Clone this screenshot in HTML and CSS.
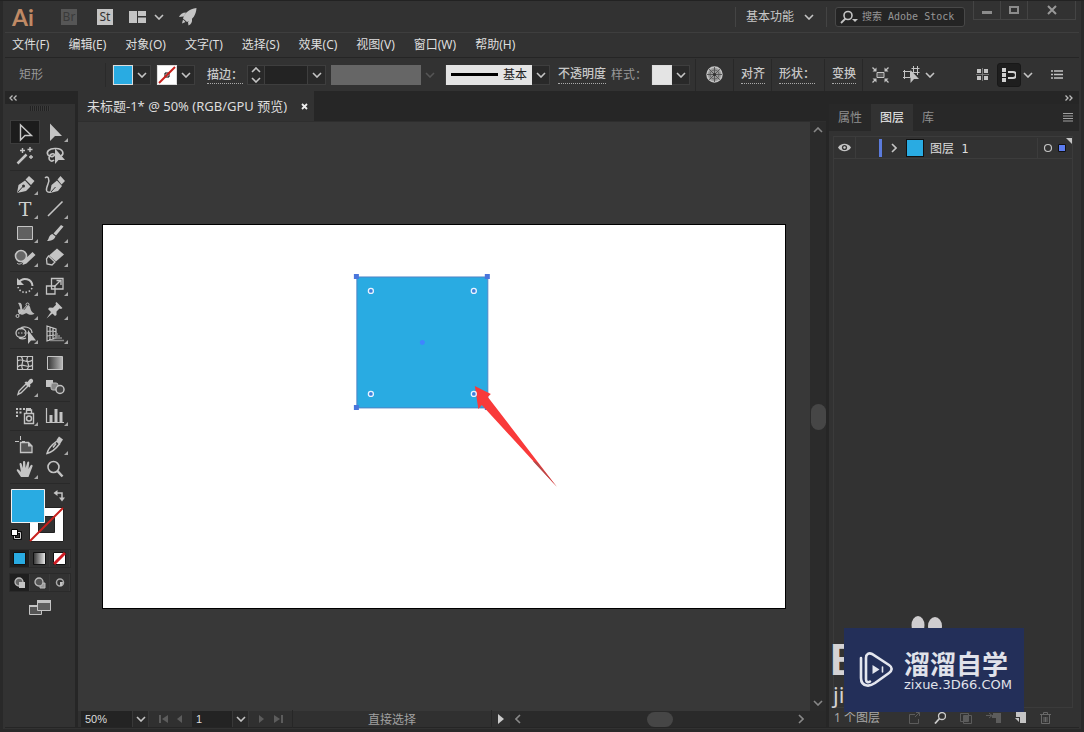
FILE: index.html
```html
<!DOCTYPE html>
<html lang="zh-CN">
<head>
<meta charset="utf-8">
<title>未标题-1* @ 50%</title>
<link rel="stylesheet" href="styles.css">
</head>
<body>
<svg class="defs" aria-hidden="true">
  <symbol id="chev" viewBox="0 0 10 6"><path d="M1 1l4 4 4-4" fill="none" stroke="currentColor" stroke-width="1.6"/></symbol>
  <symbol id="tri" viewBox="0 0 30 24"><path d="M28 18v4h-4z" fill="currentColor"/></symbol>
</svg>

<header class="titlebar">
  <span class="logo">Ai</span>
  <button class="app-badge dim">Br</button>
  <button class="app-badge">St</button>
  <button class="arrange" aria-label="排列文档">
    <svg width="17" height="12"><path d="M0 0h8v12H0zM9 0h8v5H9zM9 6.500h8V12H9z" fill="#c4c4c4"/></svg>
    <svg class="chev"><use href="#chev"/></svg>
  </button>
  <button class="rocket" aria-label="GPU 性能"><svg width="18" height="18"><path d="M17.500 0C10 1 6 4.500 4 10.500l4 3.500C14 11.500 17 7 17.500 0zM7 4.500C3.500 4.500 1 6.500 0 9l4.500-.5zM13 10.500L9 14l.5 3.500C12 16.500 13.500 14 13 10.500zM4 11.500l2.500 2.500L3 15.500z" fill="#c4c4c4"/></svg></button>
  <span class="spacer"></span>
  <div class="workspace">
    <select aria-label="工作区"><option>基本功能</option></select>
    <svg class="chev"><use href="#chev"/></svg>
  </div>
  <label class="search">
    <svg width="18" height="14"><circle cx="8" cy="5.500" r="4" fill="none" stroke="#c4c4c4" stroke-width="1.600"/><path d="M5.500 8.500L1 13" stroke="#c4c4c4" stroke-width="1.800"/><path d="M12 9h6l-3 3z" fill="#c4c4c4"/></svg>
    <input type="text" aria-label="搜索" placeholder="搜索 Adobe Stock">
  </label>
  <div class="winbtns">
    <button aria-label="最小化"><svg width="10" height="10"><path d="M0 6h10v3H0z" fill="#8c8c8c"/></svg></button>
    <button aria-label="最大化"><svg width="10" height="10"><path d="M1 2h8v6H1z" fill="none" stroke="#8c8c8c" stroke-width="2"/></svg></button>
    <button class="close" aria-label="关闭"><svg width="10" height="10"><path d="M1 1l8 8M9 1L1 9" stroke="#999" stroke-width="2"/></svg></button>
  </div>
</header>

<nav class="menubar">
  <button>文件(F)</button><button>编辑(E)</button><button>对象(O)</button><button>文字(T)</button><button>选择(S)</button><button>效果(C)</button><button>视图(V)</button><button>窗口(W)</button><button>帮助(H)</button>
</nav>

<section class="control">
  <span class="kind">矩形</span>
  <div class="combo"><button class="swatch blue" aria-label="填色"></button><button class="drop" aria-label="填色选项"><svg class="chev"><use href="#chev"/></svg></button></div>
  <div class="combo"><button class="swatch none" aria-label="描边颜色"><svg width="18" height="18"><path d="M7 7h4v4H7z" fill="none" stroke="#000"/><path d="M1 17L17 1" stroke="#c8201c" stroke-width="2"/></svg></button><button class="drop" aria-label="描边颜色选项"><svg class="chev"><use href="#chev"/></svg></button></div>
  <label class="link weight-label" for="weight">描边：</label>
  <div class="combo weight">
    <button class="spin" aria-label="增减"><svg width="10" height="16"><path d="M1 5l4-4 4 4M1 11l4 4 4-4" fill="none" stroke="#c4c4c4" stroke-width="1.600"/></svg></button>
    <input id="weight" type="text">
    <button class="drop" aria-label="描边粗细"><svg class="chev"><use href="#chev"/></svg></button>
  </div>
  <div class="profile"><span></span><svg class="chev faint"><use href="#chev"/></svg></div>
  <div class="combo"><button class="brushdef"><i></i>基本</button><button class="drop" aria-label="画笔定义"><svg class="chev"><use href="#chev"/></svg></button></div>
  <button class="link opacity">不透明度</button>
  <span class="style-label">样式：</span>
  <div class="combo"><button class="swatch pale" aria-label="样式"></button><button class="drop" aria-label="图形样式"><svg class="chev"><use href="#chev"/></svg></button></div>
  <button class="cell wheel" aria-label="重新着色图稿"><svg width="17" height="17" viewBox="0 0 17 17"><circle cx="8.500" cy="8.500" r="7.500" fill="#999" stroke="#c4c4c4" stroke-width="1.500"/><path d="M8.500 1v15M1 8.500h15M3.200 3.200l10.600 10.600M13.800 3.200L3.200 13.800" stroke="#444" stroke-width=".8"/><circle cx="8.500" cy="8.500" r="4.500" fill="none" stroke="#555" stroke-width=".8"/><circle cx="8.500" cy="8.500" r="1.600" fill="#333"/></svg></button>
  <div class="cell"><button class="link">对齐</button></div>
  <div class="cell shape"><button class="link">形状：</button></div>
  <div class="cell"><button class="link">变换</button></div>
  <div class="cell actions">
    <button aria-label="隔离选中的对象"><svg width="17" height="16"><path d="M5 5.500h7v5H5z" fill="#555" stroke="#c4c4c4"/><path d="M4.500 .5v4h-4zM12.500 .5v4h4zM4.500 15.500v-4h-4zM12.500 15.500v-4h4z" fill="#c4c4c4"/><path d="M.5 .5l3 3M16.500 .5l-3 3M.5 15.500l3-3M16.500 15.500l-3-3" stroke="#c4c4c4" stroke-width="1.300"/></svg></button>
    <button class="similar" aria-label="选择类似的对象"><svg width="17" height="17"><path d="M1.500 5.500h6v6h-6zM10.500 2.500h4v4h-4zM0 5.500h1M0 11.500h3M1.500 4v9M8.500 2.500h8M8.500 6.500h8M10.500 0v3M14.500 0v9" fill="none" stroke="#c4c4c4"/><path d="M7.500 4V17l3.500-4H16z" fill="#c4c4c4"/></svg><svg class="chev"><use href="#chev"/></svg></button>
  </div>
  <span class="spacer"></span>
  <button aria-label="网格"><svg width="13" height="13"><path d="M1 1h4v4H1zM8 1h4v4H8zM1 8h4v4H1zM8 8h4v4H8z" fill="#c4c4c4"/><path d="M0 6.500h13M6.500 0v13" stroke="#777"/></svg></button>
  <button class="snap" aria-label="对齐像素"><svg width="14" height="14"><path d="M0 0h4v4H0zM0 5h4v4H0zM0 10h4v4H0z" fill="#d0d0d0"/><path d="M6 4h5a2.500 2.500 0 010 6H6" fill="none" stroke="#d0d0d0" stroke-width="2"/></svg></button>
  <svg class="chev"><use href="#chev"/></svg>
  <button class="list-icon" aria-label="选项"><svg width="12" height="9"><path d="M3 1h9M3 4.500h9M3 8h9M0 1h2M0 4.500h2M0 8h2" stroke="#c4c4c4" stroke-width="1.300"/></svg></button>
</section>

<main class="work">
  <aside class="tools">
    <button class="collapse" aria-label="折叠"><svg width="8" height="6"><path d="M3.500 .5L1 3l2.500 2.500M7.500 .5L5 3l2.500 2.500" fill="none" stroke="#bbb" stroke-width="1.300"/></svg></button>
    <div class="grip"></div>
    <div class="toolset">
      <button class="on" aria-label="选择工具"><svg><path d="M10.500 5v15l4.500-4.500h6.500z" fill="none" stroke="#c8c8c8" stroke-width="1.400"/></svg></button>
      <button aria-label="直接选择工具"><svg><path d="M10 3.500V21l5-5h7z" fill="#c4c4c4"/><use href="#tri"/></svg></button>
      <button aria-label="魔棒工具"><svg><path d="M7.500 19.500l9-9" stroke="#c4c4c4" stroke-width="2.500"/><path d="M12.500 4v5M10 6.500h5M20 3v5M17.500 5.500h5M21 11v4M19 13h4" stroke="#c4c4c4" stroke-width="1.400"/></svg></button>
      <button aria-label="套索工具"><svg><path d="M21 12c3-2 3-7-5-7.500C9 4 6 8 8 11c3 3 8 1 6-1-2-1-5 1-5 4s3 4 5 2" fill="none" stroke="#c4c4c4" stroke-width="1.600"/><path d="M15 4.500V20l3.500-4H25z" fill="#c4c4c4"/></svg></button>
    </div>
    <div class="toolset">
      <button aria-label="钢笔工具"><svg><path d="M7 20l1.500-8 6.500-4.500 5.500 6L16 18zM15.500 6.500l3.500-3.500 5.500 5-3.500 4z" fill="#c4c4c4"/><path d="M7.500 19.500l5-5.500" stroke="#333"/><circle cx="13.500" cy="13" r="1.500" fill="#333"/><use href="#tri"/></svg></button>
      <button aria-label="曲率工具"><svg><path d="M10 20l1.500-8L17 7.500l5 5.500-4 5zM17.500 6.500L20.500 3l4.500 5-3.500 3.500z" fill="#c4c4c4"/><path d="M10.500 19.500l5-5.500" stroke="#333"/><path d="M5 5c3-3 5 1 3 6s-3 9 3 8" fill="none" stroke="#c4c4c4" stroke-width="1.500"/></svg></button>
      <button aria-label="文字工具"><svg><text x="15" y="19" text-anchor="middle" class="glyph">T</text><use href="#tri"/></svg></button>
      <button aria-label="直线段工具"><svg><path d="M8 19L22.500 4.500" stroke="#c4c4c4" stroke-width="1.600"/><use href="#tri"/></svg></button>
      <button aria-label="矩形工具"><svg><path d="M7.500 5.500h15v13h-15z" fill="#606060" stroke="#c4c4c4"/><use href="#tri"/></svg></button>
      <button aria-label="画笔工具"><svg><path d="M21 4l2.500 1.500-7.500 9-2.500-2zM12.500 13l3 2.500C14 19 11 20 7 20c2-1.500 1.500-6 5.500-7z" fill="#c4c4c4"/><use href="#tri"/></svg></button>
      <button aria-label="Shaper 工具"><svg><circle cx="11" cy="11" r="5.500" fill="#666" stroke="#c4c4c4" stroke-width="1.600"/><path d="M12.500 20l1-4.500L22.500 7l3 3-9 8.500z" fill="#c4c4c4"/><path d="M7 18c2 2 4 1 6-1" stroke="#c4c4c4" fill="none"/><use href="#tri"/></svg></button>
      <button aria-label="橡皮擦工具"><svg><path d="M17 3.500l7 6-8 7-7-6z" fill="#c4c4c4"/><path d="M8.500 11l6.500 6-3 3-5-1-.5-5z" fill="none" stroke="#c4c4c4" stroke-width="1.300"/><use href="#tri"/></svg></button>
    </div>
    <div class="toolset">
      <button aria-label="旋转工具"><svg><path d="M9 8a7.500 7.500 0 0113.500 4" fill="none" stroke="#c4c4c4" stroke-width="2"/><path d="M22 14a7.500 7.500 0 01-14-1" fill="none" stroke="#c4c4c4" stroke-width="1.600" stroke-dasharray="1.500 1.800"/><path d="M7 4v7h7z" fill="#c4c4c4"/><use href="#tri"/></svg></button>
      <button aria-label="比例缩放工具"><svg><path d="M11.500 4.500H23V15H11.500zM6.500 12H15v8H6.500z" fill="none" stroke="#c4c4c4" stroke-width="1.300"/><path d="M14 13l6-6M16.500 6.500H21V11" fill="none" stroke="#c4c4c4" stroke-width="1.300"/><use href="#tri"/></svg></button>
      <button aria-label="宽度工具"><svg><path d="M8 5c3-1 4 1 4 4s2 4 3.500 1.500S19 6 20 9s1 5 4.500 6.500c-3 2.500-5.500 1-7.500 0s-3 2-6 1-3-2.500-3-4 1-1.500 2-1S9.500 7 8 5z" fill="#bbb"/><path d="M7.500 18L18 6" stroke="#c4c4c4"/><circle cx="7.500" cy="18" r="1.500" fill="#333" stroke="#c4c4c4"/><circle cx="17.500" cy="6.500" r="1.500" fill="#333" stroke="#c4c4c4"/><use href="#tri"/></svg></button>
      <button aria-label="操控变形工具"><svg><path d="M16.500 4l6 6-1.500 1-1.500-.5-3 3 0 3.500L15 18l-7-7 1.500-1.500 3.500.2 3-3L15.500 5zM11 14l1.500 1.500L6.500 20.500z" fill="#c4c4c4"/><use href="#tri"/></svg></button>
      <button aria-label="形状生成器工具"><svg><ellipse cx="11" cy="11" rx="5" ry="4.500" fill="none" stroke="#c4c4c4" stroke-width="1.300"/><path d="M10 7c3-4 12-2 12 4M9 16c2 1 5 1 7 0" fill="none" stroke="#c4c4c4" stroke-width="1.300"/><path d="M8 11h10" stroke="#c4c4c4" stroke-dasharray="1.500 1.500"/><path d="M18 8v14l3-3.500h5z" fill="#c4c4c4"/><use href="#tri"/></svg></button>
      <button aria-label="透视网格工具"><svg><path d="M7 4v15l9-3V7zM10 5v13M13 6v11M7 9l9 .5M7 14l9-1" fill="none" stroke="#c4c4c4" stroke-width="1.200"/><path d="M16 12h2M15 14h5M14 16h8M10 18.500h14" stroke="#888" stroke-width="1.400"/><use href="#tri"/></svg></button>
    </div>
    <div class="toolset">
      <button aria-label="网格工具"><svg><path d="M7.500 5.500h15v13h-15zM7.500 10c5-4 9 4 15-1M7.500 16c5-6 10 3 15-2M11 5.500c5 5-2 8 2 13M18 5.500c-4 5 4 8-1 13" fill="none" stroke="#c4c4c4" stroke-width="1.200"/></svg></button>
      <button aria-label="渐变工具"><svg><defs><linearGradient id="g1"><stop stop-color="#333"/><stop offset="1" stop-color="#bbb"/></linearGradient></defs><path d="M7.500 5.500h15v13h-15z" fill="url(#g1)" stroke="#c4c4c4"/></svg></button>
      <button aria-label="吸管工具"><svg><path d="M8 19.500l1-3.500 7-7 2 2-7 7z" fill="none" stroke="#c4c4c4" stroke-width="1.400"/><path d="M14.500 7.500l1.500-1 1.500.5 2-2.500c2-2 5 1 3 3l-2.500 2 .5 1.500-1 1.500z" fill="#c4c4c4"/><use href="#tri"/></svg></button>
      <button aria-label="混合工具"><svg><path d="M6 5h7v7H6z" fill="#c4c4c4"/><rect x="11" y="8" width="7" height="7" rx="2" fill="#888" stroke="#bbb"/><circle cx="20" cy="14.500" r="4" fill="#444" stroke="#c4c4c4" stroke-width="1.500"/></svg></button>
    </div>
    <div class="toolset">
      <button aria-label="符号喷枪工具"><svg><path d="M6 5h2M9.500 5h2M13 5h2M6 8.500h2M9.500 8.500h2M6 12h2" stroke="#c4c4c4" stroke-width="2"/><path d="M14.500 9.500h9v10h-9zM16.500 9V6h5v3" fill="none" stroke="#c4c4c4" stroke-width="1.400"/><path d="M16 4h5v3h-5z" fill="#c4c4c4"/><circle cx="19" cy="14.500" r="2.500" fill="none" stroke="#c4c4c4" stroke-width="1.500"/><use href="#tri"/></svg></button>
      <button aria-label="柱形图工具"><svg><path d="M6.500 4v14.500H24" fill="none" stroke="#c4c4c4" stroke-width="1.200"/><path d="M9.500 11h3v7h-3zM14.500 5h3v13h-3zM19.500 8h3v10h-3z" fill="#c4c4c4"/><use href="#tri"/></svg></button>
    </div>
    <div class="toolset">
      <button aria-label="画板工具"><svg><path d="M5 8.500h4M12 8.500h3M10.500 3v4M10.500 10v2" stroke="#c4c4c4"/><path d="M10.500 9.500h8l3.500 3.500v6.500H10.500z" fill="#555" stroke="#c4c4c4" stroke-width="1.300"/><path d="M18 9v4.500h4.500z" fill="#c4c4c4"/></svg></button>
      <button aria-label="切片工具"><svg><path d="M7 20.500c1-5 5-9 10-12.500l2.500 3c-3 4-7 8-12.500 9.500zM16 10.500l-3 4" fill="none" stroke="#c4c4c4" stroke-width="1.500"/><path d="M16.500 7L19 3.500l4 3-3 4.500z" fill="#c4c4c4"/><use href="#tri"/></svg></button>
      <button aria-label="抓手工具"><svg><path d="M11 20L7 14c-1-2 1-2.500 2-1l2 2L9.500 7c0-1.500 2-1.500 2.200 0L13 11V5c0-1.500 2.200-1.500 2.200 0l.4 6 1.600-5.500c.5-1.500 2.300-1 2 .5L18.500 12l2-3.500c1-1.500 2.500-.5 2 1L20 16l-1.500 4z" fill="#c4c4c4"/><use href="#tri"/></svg></button>
      <button aria-label="缩放工具"><svg><circle cx="13.500" cy="10" r="5.500" fill="none" stroke="#c4c4c4" stroke-width="1.600"/><path d="M17.500 14l5 5.500" stroke="#c4c4c4" stroke-width="2.500"/></svg></button>
    </div>
    <svg class="colors" width="60" height="54" viewBox="0 0 60 54" role="img" aria-label="填色和描边">
      <path d="M19.500 18.500h34v34h-34z" fill="#fff" stroke="#222"/><path d="M28.500 27.500h16v16h-16z" fill="#323232" stroke="#222"/><path d="M20 52l33-33" stroke="#c8201c" stroke-width="2"/>
      <path d="M1.500 .5h33v33h-33z" fill="#29abe2" stroke="#f2f2f2"/>
      <path d="M46 4h6v6" fill="none" stroke="#c4c4c4" stroke-width="1.500"/><path d="M43.500 4l4-3v6zM49 8.500h6L52 12.500z" fill="#c4c4c4"/>
      <path d="M4.500 43.500h6v6h-6z" fill="none" stroke="#000" stroke-width="2.500"/><path d="M4.500 43.500h6v6h-6z" fill="none" stroke="#ccc"/><path d="M1.500 40.500h6v6h-6z" fill="#fff" stroke="#000"/>
    </svg>
    <div class="modes">
      <button class="on" aria-label="颜色"><svg width="13" height="13"><path d="M.5 .5h12v12H.5z" fill="#29abe2" stroke="#111"/></svg></button>
      <button aria-label="渐变"><svg width="13" height="13"><defs><linearGradient id="g2"><stop stop-color="#333"/><stop offset="1" stop-color="#eee"/></linearGradient></defs><path d="M.5 .5h12v12H.5z" fill="url(#g2)" stroke="#111"/></svg></button>
      <button aria-label="无"><svg width="13" height="13"><path d="M.5 .5h12v12H.5z" fill="#fff" stroke="#111"/><path d="M1 12L12 1" stroke="#d01c24" stroke-width="3"/></svg></button>
    </div>
    <div class="modes">
      <button class="on" aria-label="正常绘图"><svg width="12" height="12"><circle cx="5" cy="5" r="4" fill="#666" stroke="#bbb" stroke-width="1.300"/><path d="M5 5h6v6H5z" fill="#c4c4c4"/></svg></button>
      <button aria-label="背面绘图"><svg width="12" height="12"><path d="M6 6h5v5H6z" fill="#999" stroke="#bbb"/><circle cx="5" cy="5" r="4" fill="#555" stroke="#bbb" stroke-width="1.300"/></svg></button>
      <button aria-label="内部绘图"><svg width="12" height="12"><circle cx="6" cy="5.500" r="3.500" fill="#333" stroke="#aaa" stroke-width="1.500"/><path d="M6 5h3l-1 4H6z" fill="#c4c4c4"/></svg></button>
    </div>
    <button class="screen" aria-label="更改屏幕模式"><svg width="22" height="16"><path d="M.5 5.500h12v9H.5z" fill="#555" stroke="#c4c4c4"/><path d="M8.500 1.500h13v9h-13z" fill="#606060" stroke="#c4c4c4"/><path d="M8 0h14v3H8zM0 5h8v2H0z" fill="#c4c4c4"/></svg></button>
  </aside>

  <section class="doc">
    <div class="tabs"><div class="tab"><span>未标题-1* @ 50% (RGB/GPU 预览)</span><button aria-label="关闭文档"><svg width="7" height="7"><path d="M1 1l5 5M6 1L1 6" stroke="#eee" stroke-width="1.800"/></svg></button></div></div>
    <div class="view">
      <div class="canvas">
        <div class="artboard">
          <svg viewBox="0 0 682 383">
            <path d="M254 52h131v131H254z" fill="#29abe2" stroke="#4f86c6"/>
            <path d="M251 49h5v5h-5zM382 49h5v5h-5zM251 180h5v5h-5zM382 180h5v5h-5z" fill="#4a76dc"/>
            <circle cx="319.500" cy="117.500" r="2.500" fill="#3f85ff"/>
            <g fill="#3f80dc" stroke="#e8f4ff" stroke-width="1.300"><circle cx="268" cy="66" r="2.500"/><circle cx="371" cy="66" r="2.500"/><circle cx="268" cy="169" r="2.500"/></g>
            <path d="M372 161l16 8-3 3 69 90-75-82-3.500 4z" fill="#f93a3a"/>
            <path d="M434 237l20 25-24-26z" fill="#b24b4b"/>
            <circle cx="371" cy="169" r="2.500" fill="#3f80dc" stroke="#e8f4ff" stroke-width="1.300"/>
          </svg>
        </div>
      </div>
      <div class="vscroll"><svg class="chev up"><use href="#chev"/></svg><i></i><svg class="chev"><use href="#chev"/></svg></div>
    </div>
    <footer class="status">
      <input class="zoom" type="text" value="50%" aria-label="缩放"><button class="drop" aria-label="缩放级别"><svg class="chev"><use href="#chev"/></svg></button>
      <span class="nav"><button aria-label="首项"><svg width="9" height="8"><path d="M0 0h2v8H0zM9 0v8L3 4z" fill="#5c5c5c"/></svg></button><button aria-label="上一项"><svg width="6" height="8"><path d="M5 0v8L0 4z" fill="#5c5c5c"/></svg></button></span>
      <input class="page" type="text" value="1" aria-label="画板"><button class="drop" aria-label="画板列表"><svg class="chev"><use href="#chev"/></svg></button>
      <span class="nav"><button aria-label="下一项"><svg width="6" height="8"><path d="M0 0v8l5-4z" fill="#5c5c5c"/></svg></button><button aria-label="末项"><svg width="9" height="8"><path d="M7 0h2v8H7zM0 0v8l6-4z" fill="#5c5c5c"/></svg></button></span>
      <span class="toolname">直接选择</span>
      <button class="play" aria-label="状态选项"><svg width="6" height="10"><path d="M0 0v10l6-5z" fill="#ccc"/></svg></button>
      <div class="hscroll"><svg class="chev left"><use href="#chev"/></svg><i></i><svg class="chev right"><use href="#chev"/></svg></div>
    </footer>
  </section>

  <aside class="panel">
    <div class="expand"><svg width="8" height="6"><path d="M.5 .5L3 3 .5 5.500M4.500 .5L7 3 4.500 5.500" fill="none" stroke="#bbb" stroke-width="1.300"/></svg></div>
    <div class="ptabs" role="tablist"><button role="tab">属性</button><button role="tab" class="on">图层</button><button role="tab">库</button><span class="spacer"></span><svg width="10" height="9"><path d="M0 .5h10M0 3h10M0 5.500h10M0 8h10" stroke="#a0a0a0"/></svg></div>
    <div class="layers">
      <div class="layer">
        <button class="eye" aria-label="可见"><svg width="13" height="9" viewBox="0 0 13 9"><path d="M0 4.500C3-.5 10-.5 13 4.500 10 9.500 3 9.500 0 4.500z" fill="#c4c4c4"/><circle cx="6.500" cy="4.500" r="2.600" fill="#333"/><circle cx="6.500" cy="4.500" r="1.200" fill="#ccc"/></svg></button>
        <span class="lock"></span><span class="mark"></span>
        <button class="open" aria-label="展开"><svg class="chev right"><use href="#chev"/></svg></button>
        <span class="thumb"></span><span class="lname">图层 1</span>
        <span class="target"><svg width="26" height="20"><circle cx="7" cy="10" r="3.500" fill="none" stroke="#c4c4c4" stroke-width="1.200"/><path d="M17.500 6.500h7v7h-7z" fill="#5c7cf0" stroke="#111"/></svg></span>
        <svg class="fold" width="6" height="6"><path d="M0 0h6v6z" fill="#c4c4c4"/></svg>
      </div>
    </div>
    <footer class="pfoot"><span>1 个图层</span>
      <svg width="11" height="12"><path d="M6 2.500H.5v9h9V7M6 5l4-4M7 .5h3.500V4" fill="none" stroke="#5c5c5c"/></svg>
      <svg width="12" height="12"><circle cx="8" cy="4" r="3.500" fill="none" stroke="#ccc" stroke-width="1.300"/><path d="M5.500 6.500L1 11.500" stroke="#ccc" stroke-width="1.800"/></svg>
      <svg width="12" height="12"><path d="M.5 1.500h8v8h-8zM3.500 3.500h8v8h-8z" fill="none" stroke="#5c5c5c"/><path d="M4 4h4v5H4z" fill="#5c5c5c"/></svg>
      <svg width="15" height="12"><path d="M0 3.500h5M3 1l3 2.500L3 6M6.500 3v3" fill="none" stroke="#5c5c5c"/><path d="M7 1h8v10h-5V6H7z" fill="#5c5c5c"/></svg>
      <svg width="11" height="12"><path d="M1 0h10v11H5V5H1z" fill="#c4c4c4"/><path d="M0 6h4v4z" fill="#c4c4c4"/></svg>
      <svg width="11" height="12"><path d="M0 2.500h11M3.500 2V.5h4V2M1.500 3v8.500h8V3M4 5v5M5.500 5v5M7 5v5" fill="none" stroke="#686868"/></svg>
    </footer>
    <div class="wm">
      <svg class="ears" width="32" height="14"><ellipse cx="7" cy="9" rx="6.500" ry="9" fill="#cfcdcf"/><ellipse cx="24" cy="10" rx="7" ry="9" fill="#cfcdcf"/></svg>
      <div class="under"><b>B</b><span>ji</span></div>
      <div class="card">
        <svg width="34" height="36" viewBox="0 0 34 36" fill="none" stroke="#e4e6ee" stroke-width="2.600" stroke-linecap="round"><path d="M11 29.500c-2 1.500-4 .5-4-2V6c0-4 3-5.500 6-4l17 11c4 2.500 3 6 0 8L16 31c-3 2-5 3-8 2.500-4-.5-6-3.500-6-7.500V6"/><path d="M13.500 13v9l7-4.500z" fill="#e4e6ee" stroke="none"/><path d="M23.500 15v5" stroke-width="1.600"/></svg>
        <div class="brand"><strong>溜溜自学</strong><span>zixue.3D66.COM</span></div>
      </div>
    </div>
  </aside>
</main>
</body>
</html>
```
FILE: styles.css
```css
* { box-sizing: border-box; }

body {
  margin: 0;
  height: 100vh;
  display: flex;
  flex-direction: column;
  overflow: hidden;
  padding: 0 5px 4px;
  background: #323232;
  border-top: 1px solid #222;
  color: #c8c8c8;
  font: 12px/16px "Noto Sans", "Noto Sans CJK SC", sans-serif;
  box-shadow: inset 3px 0 #292929, inset -3px 0 #292929, inset 0 -3px #292929;
}

button, input, select {
  margin: 0;
  padding: 0;
  border: 0;
  background: none;
  color: inherit;
  font: inherit;
  min-width: 0;
}

button { display: flex; align-items: center; justify-content: center; flex: none; }
svg { display: block; flex: none; }
.defs { position: absolute; width: 0; height: 0; }
.spacer { flex: 1; }
.chev { width: 10px; height: 6px; color: #c4c4c4; }
.chev.up { transform: rotate(180deg); }
.chev.left { transform: rotate(90deg); }
.chev.right { transform: rotate(-90deg); }
.chev.faint { color: #555; }

/* title bar */
.titlebar { display: flex; align-items: center; height: 32px; flex: none; padding: 0 3px 0 7px; border-bottom: 1px solid #3e3e3e; }
.logo { width: 49px; color: #c08a65; font: bold 23px/28px Lato, sans-serif; }
.app-badge { width: 16px; height: 16px; margin-right: 20px; background: #c4c4c4; color: #333; font: 12px/16px "Noto Sans", sans-serif; }
.app-badge.dim { background: #565656; color: #3a3a3a; }
.arrange { gap: 8px; margin: 0 15px 0 -4px; }
.workspace { display: flex; align-items: center; height: 20px; padding: 0 12px 0 10px; border-left: 1px solid #444; border-right: 1px solid #444; gap: 8px; }
.workspace select { appearance: none; width: 50px; }
.search { display: flex; align-items: center; gap: 4px; width: 130px; height: 20px; margin: 0 8px; padding: 0 4px; background: #242424; border: 1px solid #484848; border-radius: 3px; }
.search input { flex: 1; font: 10px/16px "DejaVu Sans Mono", "Noto Sans CJK SC", monospace; outline: 0; }
.search input::placeholder { color: #969696; opacity: 1; }
.winbtns { display: flex; align-self: flex-start; height: 19px; border: 1px solid #444; border-top: 0; }
.winbtns button { width: 27px; border-right: 1px solid #444; }
.winbtns .close { width: 47px; border: 0; }

/* menu */
.menubar { display: flex; gap: 19px; flex: none; height: 25px; padding-left: 7px; color: #dedede; border-bottom: 1px solid #252525; }
.menubar button { height: 24px; }

/* control bar */
.control { display: flex; align-items: center; flex: none; height: 33px; font-family: "Liberation Sans", "Noto Sans CJK SC", sans-serif; }
.kind { width: 101px; margin-right: 6px; padding-left: 14px; color: #999; border-right: 1px solid #2a2a2a; line-height: 24px; }
.combo { display: flex; align-items: center; height: 20px; margin-right: 5px; border: 1px solid #3e3e3e; }
.swatch { width: 20px; height: 20px; border: 1px solid #ddd; }
.blue { background: #29abe2; }
.none { background: #fff; }
.pale { background: #e4e4e4; }
.drop { width: 17px; height: 18px; background: #292929; }
.link { height: 18px; border-bottom: 1px dotted #aaa; color: #c8c8c8; font-weight: 500; line-height: 18px; white-space: nowrap; }
.weight-label { margin: 0 4px 0 7px; }
.spin { width: 16px; height: 18px; background: #292929; }
.weight input { width: 44px; height: 18px; background: #232323; border: solid #3e3e3e; border-width: 0 1px; }
.profile { display: flex; align-items: center; gap: 4px; margin-right: 10px; }
.profile span { width: 90px; height: 20px; background: #666; }
.brushdef { width: 86px; height: 20px; gap: 5px; background: #e4e4e4; color: #222; }
.brushdef i { width: 47px; height: 3px; background: #000; }
.opacity { margin-left: 3px; }
.style-label { margin: 0 4px 0 5px; color: #999; white-space: nowrap; }
.cell { display: flex; align-items: center; height: 32px; padding: 0 6px 0 7px; border-left: 1px solid #282828; }
.wheel { padding: 0 10px; }
.shape { padding-right: 9px; }
.actions { gap: 14px; padding-left: 9px; }
.similar { gap: 5px; }
.snap { width: 24px; height: 24px; margin: 0 2px 0 8px; background: #1e1e1e; border: 1px solid #181818; border-radius: 3px; }
.list-icon { margin: 0 16px 0 18px; }

/* work area */
.work { display: flex; flex: 1; min-height: 0; gap: 3px; background: #262626; border-bottom: 1px solid #252525; }
.tools { width: 70px; flex: none; background: #323232; display: flex; flex-direction: column; align-items: center; }
.collapse { align-self: stretch; height: 13px; padding-left: 4px; justify-content: flex-start; background: #262626; }
.grip { width: 20px; height: 5px; margin: 2px 0 9px; background: repeating-linear-gradient(90deg, #222 0 1px, #3a3a3a 1px 2px); }
.toolset { display: grid; grid-template-columns: 30px 30px; grid-auto-rows: 24px; padding-bottom: 2px; margin-bottom: 2px; border-bottom: 1px solid #292929; }
.toolset svg { width: 30px; height: 24px; color: #a8a8a8; }
.toolset .on { background: #1c1c1c; box-shadow: inset 0 0 0 1px #3c3c3c; }
.glyph { font: 19px "DejaVu Serif", serif; fill: #d0d0d0; }
.colors { margin: 3px 0 6px; }
.modes { display: flex; margin-bottom: 5px; border: 1px solid #2a2a2a; }
.modes button { width: 20px; height: 17px; border-right: 1px solid #3a3a3a; }
.modes .on { background: #1f1f1f; }
.screen { margin-top: 3px; }

.doc { flex: 1; min-width: 0; display: flex; flex-direction: column; }
.tabs { display: flex; height: 30px; flex: none; }
.tab { display: flex; align-items: center; width: 236px; padding: 0 6px 0 9px; justify-content: space-between; background: #323232; color: #dcdcdc; font-size: 13px; white-space: nowrap; }
.view { display: flex; flex: 1; min-height: 0; border-top: 1px solid #2e2e2e; }
.canvas { flex: 1; display: flex; align-items: center; justify-content: center; background: #383838; }
.artboard { width: 93.4%; background: #fff; border: 1px solid #000; }
.artboard svg { width: 100%; height: auto; }
.vscroll { display: flex; flex-direction: column; align-items: center; justify-content: space-between; width: 16px; padding: 5px 0; background: #2b2b2b; }
.vscroll .chev, .hscroll .chev { color: #888; }
.vscroll i { width: 15px; height: 26px; border-radius: 8px; background: #464646; }
.status { display: flex; align-items: center; flex: none; height: 16px; padding-left: 3px; background: #303030; }
.status input { height: 16px; padding: 0 4px; background: #232323; font: 11px/14px "Liberation Sans", sans-serif; color: #ddd; }
.status .drop { height: 16px; border: solid #383838; border-width: 0 1px; }
.zoom { width: 51px; }
.page { width: 40px; }
.nav { display: flex; justify-content: center; align-items: center; gap: 9px; width: 43px; }
.toolname { flex: 1; padding-top: 2px; line-height: 16px; text-align: center; color: #a0a0a0; border: solid #272727; border-width: 0 1px; }
.play { width: 18px; }
.hscroll { display: flex; align-items: center; justify-content: space-between; width: 316px; height: 16px; padding: 0 20px 0 3px; background: #2a2a2a; }
.hscroll i { width: 26px; height: 15px; border-radius: 8px; background: #464646; }

/* layers panel */
.panel { position: relative; width: 250px; flex: none; display: flex; flex-direction: column; background: #323232; }
.expand { display: flex; align-items: center; justify-content: flex-end; height: 13px; padding-right: 6px; background: #262626; }
.ptabs { display: flex; align-items: center; height: 27px; padding-right: 6px; background: #282828; color: #909090; }
.ptabs button { height: 27px; padding: 1px 9px 0; }
.ptabs .on { background: #323232; color: #f0f0f0; }
.layers { flex: 1; margin: 5px 6px 0 4px; border: solid #3b3b3b; border-width: 0 1px 1px; }
.layer { position: relative; display: flex; align-items: center; height: 23px; border: solid #3c3c3c; border-width: 1px 0; }
.eye { width: 22px; height: 21px; border-right: 1px solid #3c3c3c; }
.lock { width: 23px; }
.mark { width: 3px; height: 18px; background: #5b7bdc; }
.open { width: 24px; }
.thumb { width: 18px; height: 18px; margin-right: 6px; background: #29abe2; border: 1px solid #111; }
.lname { flex: 1; padding-top: 2px; color: #ddd; font-family: "DejaVu Sans Mono", "Noto Sans CJK SC", monospace; }
.target { padding-left: 3px; border-left: 1px solid #3c3c3c; margin-right: 5px; }
.fold { position: absolute; top: 1px; right: 0; }
.pfoot { display: flex; align-items: center; gap: 14px; height: 19px; padding-left: 5px; color: #a8a8a8; }
.pfoot span { width: 61px; white-space: nowrap; }

/* watermark over the panel */
.wm { position: absolute; right: 55px; bottom: 15px; width: 180px; height: 84px; }
.ears { position: absolute; left: 67px; top: -12px; }
.under { position: absolute; left: -14px; top: 9px; color: #d4d2d4; font: 22px/22px "Noto Sans", sans-serif; }
.under b { display: block; font: bold 44px/46px "Liberation Sans", sans-serif; }
.under span { padding-left: 3px; }
.card { position: relative; display: flex; align-items: center; gap: 11px; height: 84px; padding-left: 15px; background: #232f59; color: #e0e2ea; }
.brand { display: flex; flex-direction: column; }
.brand strong { font: bold 26px/30px "Noto Sans CJK SC", sans-serif; }
.brand span { font: 13px/14px "DejaVu Sans", sans-serif; }
```
